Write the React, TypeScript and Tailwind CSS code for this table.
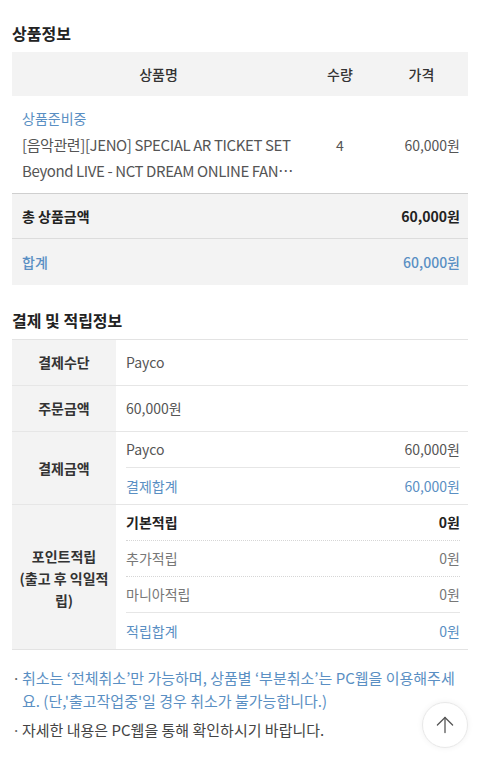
import { ArrowUp } from 'lucide-react';

const font = { fontFamily: '"Noto Sans CJK KR", "Noto Sans", sans-serif' };

function SubRow({
  label,
  value,
  tone = 'normal',
  line = 'none',
}: {
  label: string;
  value: string;
  tone?: 'bold' | 'normal' | 'muted' | 'blue';
  line?: 'none' | 'dotted' | 'solid';
}) {
  const color =
    tone === 'bold'
      ? 'text-[#222] font-bold'
      : tone === 'blue'
      ? 'text-[#5a8fc3]'
      : tone === 'muted'
      ? 'text-[#777]'
      : 'text-[#555]';
  const border =
    line === 'dotted'
      ? 'border-b border-dotted border-[#d6d6d6]'
      : line === 'solid'
      ? 'border-b border-[#e6e6e6]'
      : '';
  return (
    <div className={`flex h-[36px] items-center justify-between text-[14px] ${color} ${border}`}>
      <span>{label}</span>
      <span>{value}</span>
    </div>
  );
}

export default function App() {
  return (
    <div className="min-h-[759px] bg-white px-3 pt-[20px] pb-6 text-[#333]" style={font}>
      <h2 className="text-[16px] font-bold leading-[26px] text-[#222]">상품정보</h2>

      <div className="mt-[6px]">
        <div className="grid h-[44px] grid-cols-[293px_70px_1fr] items-center bg-[#f3f3f3] text-[14px] font-medium text-[#333]">
          <div className="text-center">상품명</div>
          <div className="text-center">수량</div>
          <div className="text-center">가격</div>
        </div>

        <div className="grid grid-cols-[293px_70px_1fr] pt-[11px] pb-[9px]">
          <div className="pl-[10px] pr-[8px]">
            <div className="text-[14px] leading-[22px] text-[#5a8fc3]">상품준비중</div>
            <div className="mt-[3px] line-clamp-2 break-all text-[15px] leading-[26px] tracking-[-0.4px] text-[#555]">
              [음악관련][JENO] SPECIAL AR TICKET SET Beyond LIVE - NCT DREAM ONLINE FANMEETING
            </div>
          </div>
          <div className="pt-[25px] text-center text-[14px] leading-[26px] text-[#555]">4</div>
          <div className="pt-[25px] pr-[8px] text-right text-[14px] leading-[26px] text-[#555]">60,000원</div>
        </div>

        <div className="flex h-[45px] items-center justify-between border-t border-[#cfcfcf] bg-[#f3f3f3] pl-[10px] pr-[8px] text-[14px] font-bold text-[#222]">
          <span>총 상품금액</span>
          <span>60,000원</span>
        </div>
        <div className="flex h-[47px] items-center justify-between border-t border-[#dcdcdc] bg-[#f3f3f3] pl-[10px] pr-[8px] text-[14px] font-medium text-[#5a8fc3]">
          <span>합계</span>
          <span>60,000원</span>
        </div>
      </div>

      <h2 className="mt-[22px] text-[16px] font-bold leading-[26px] text-[#222]">결제 및 적립정보</h2>

      <div className="mt-[6px] border-t border-b border-[#e3e3e3] text-[14px]">
        <div className="grid h-[46px] grid-cols-[104px_1fr] border-b border-[#e6e6e6]">
          <div className="flex items-center justify-center bg-[#f3f3f3] font-bold text-[#333]">결제수단</div>
          <div className="flex items-center pl-[10px] text-[#555]">Payco</div>
        </div>
        <div className="grid h-[46px] grid-cols-[104px_1fr] border-b border-[#e6e6e6]">
          <div className="flex items-center justify-center bg-[#f3f3f3] font-bold text-[#333]">주문금액</div>
          <div className="flex items-center pl-[10px] text-[#555]">60,000원</div>
        </div>
        <div className="grid grid-cols-[104px_1fr] border-b border-[#e6e6e6]">
          <div className="flex items-center justify-center bg-[#f3f3f3] font-bold text-[#333]">결제금액</div>
          <div className="pl-[10px] pr-[8px]">
            <SubRow label="Payco" value="60,000원" line="solid" />
            <SubRow label="결제합계" value="60,000원" tone="blue" />
          </div>
        </div>
        <div className="grid grid-cols-[104px_1fr]">
          <div className="flex items-center justify-center bg-[#f3f3f3] px-[6px] pt-[2px] text-center font-bold leading-[22px] text-[#333]">
            포인트적립
            <br />
            (출고 후 익일적립)
          </div>
          <div className="pl-[10px] pr-[8px]">
            <SubRow label="기본적립" value="0원" tone="bold" line="dotted" />
            <SubRow label="추가적립" value="0원" tone="muted" line="dotted" />
            <SubRow label="마니아적립" value="0원" tone="muted" line="solid" />
            <SubRow label="적립합계" value="0원" tone="blue" />
          </div>
        </div>
      </div>

      <ul className="mt-[16px] space-y-[6px] text-[15px] leading-[23px]">
        <li className="flex text-[#5a8fc3]">
          <span className="w-[10px] shrink-0 text-[#666]">·</span>
          <span>
            취소는 ‘전체취소’만 가능하며, 상품별 ‘부분취소’는 PC웹을 이용해주세요. (단,'출고작업중'일 경우 취소가 불가능합니다.)
          </span>
        </li>
        <li className="flex text-[#444]">
          <span className="w-[10px] shrink-0 text-[#666]">·</span>
          <span>자세한 내용은 PC웹을 통해 확인하시기 바랍니다.</span>
        </li>
      </ul>

      <button className="fixed right-[12px] bottom-[11px] flex h-[46px] w-[46px] items-center justify-center rounded-full border border-[#e8e8e8] bg-white shadow-[0_0_6px_rgba(0,0,0,0.06)]">
        <ArrowUp size={26} strokeWidth={1.2} className="text-[#555]" />
      </button>
    </div>
  );
}
